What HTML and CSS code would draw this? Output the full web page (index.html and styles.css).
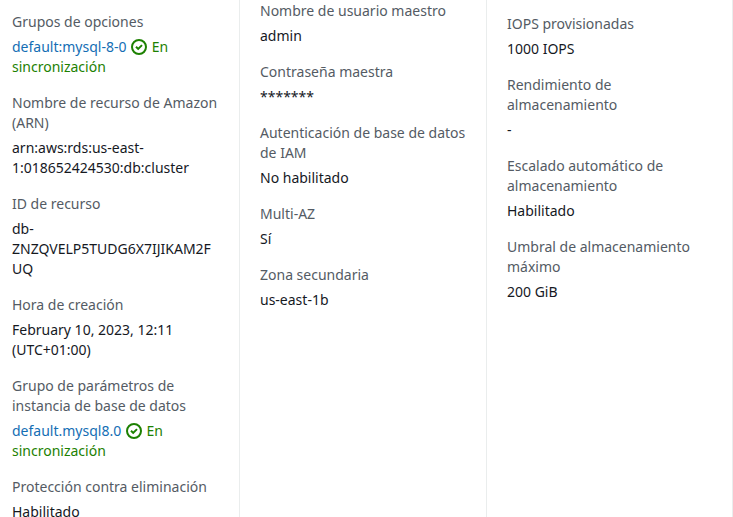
FILE: index.html
```html
<!DOCTYPE html>
<html lang="es">
<head>
<meta charset="utf-8">
<title>Configuración</title>
<link rel="stylesheet" href="styles.css">
</head>
<body>
<main class="columns">
  <dl class="column column-group">
    <div class="field"><dt>Grupos de opciones</dt><dd><a href="#">default:mysql-8-0</a> <span class="status"><svg class="icon" viewBox="0 0 16 16" aria-hidden="true"><circle cx="8" cy="8" r="7"/><path d="M5 7.7l2.2 2.2L11 6.100"/></svg> En sincronización</span></dd></div>
    <div class="field"><dt>Nombre de recurso de Amazon (ARN)</dt><dd>arn:aws:rds:us-east-1:018652424530:db:cluster</dd></div>
    <div class="field"><dt>ID de recurso</dt><dd>db-ZNZQVELP5TUDG6X7IJIKAM2FUQ</dd></div>
    <div class="field"><dt>Hora de creación</dt><dd>February 10, 2023, 12:11 (UTC+01:00)</dd></div>
    <div class="field"><dt>Grupo de parámetros de instancia de base de datos</dt><dd><a href="#">default.mysql8.0</a> <span class="status"><svg class="icon" viewBox="0 0 16 16" aria-hidden="true"><circle cx="8" cy="8" r="7"/><path d="M5 7.7l2.2 2.2L11 6.100"/></svg> En sincronización</span></dd></div>
    <div class="field"><dt>Protección contra eliminación</dt><dd>Habilitado</dd></div>
  </dl>
  <dl class="column column-access">
    <div class="field"><dt>Nombre de usuario maestro</dt><dd>admin</dd></div>
    <div class="field"><dt>Contraseña maestra</dt><dd>*******</dd></div>
    <div class="field"><dt>Autenticación de base de datos de IAM</dt><dd>No habilitado</dd></div>
    <div class="field"><dt>Multi-AZ</dt><dd>Sí</dd></div>
    <div class="field"><dt>Zona secundaria</dt><dd>us-east-1b</dd></div>
  </dl>
  <dl class="column column-storage">
    <div class="field"><dt>IOPS provisionadas</dt><dd>1000 IOPS</dd></div>
    <div class="field"><dt>Rendimiento de almacenamiento</dt><dd>-</dd></div>
    <div class="field"><dt>Escalado automático de almacenamiento</dt><dd>Habilitado</dd></div>
    <div class="field"><dt>Umbral de almacenamiento máximo</dt><dd>200 GiB</dd></div>
  </dl>
</main>
</body>
</html>
```
FILE: styles.css
```css
* { box-sizing: border-box; }
body {
  margin: 0;
  background: #fff;
  color: #16191f;
  font: 14px/20px "Noto Sans", sans-serif;
  overflow: hidden;
}
.columns {
  display: grid;
  grid-template-columns: 240fr 247fr 246fr;
  min-height: 100vh;
}
.column {
  margin: 0;
  padding: 12px 20px 0;
  border-right: 1px solid #eaeded;
  display: flex;
  flex-direction: column;
  gap: 16px;
}
.column-group { padding-left: 12px; }
.column-access { padding-top: 1px; }
.column-storage { padding-top: 14px; }
.field {
  display: flex;
  flex-direction: column;
  gap: 5px;
}
dt { color: #545b64; }
dd { margin: 0; overflow-wrap: anywhere; }
a { color: #146eb4; text-decoration: none; }
.status { color: #1d8102; }
.icon {
  width: 16px;
  height: 16px;
  margin: 0 1px;
  vertical-align: -3px;
  fill: none;
  stroke: currentColor;
  stroke-width: 2;
}
```
